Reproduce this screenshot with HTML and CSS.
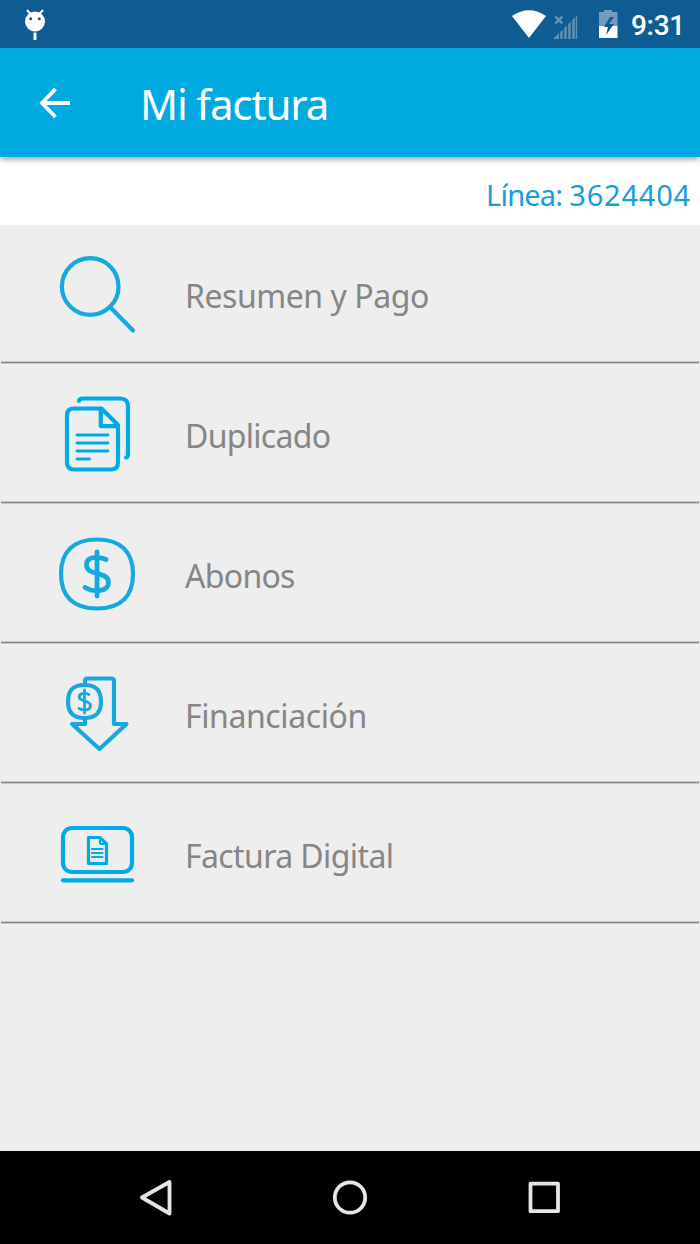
FILE: index.html
```html
<!DOCTYPE html>
<html lang="es">
<head>
    <meta charset="utf-8">
    <title>Mi factura</title>
    <link rel="stylesheet" href="styles.css">
</head>
<body>
    <div class="screen">
        <div class="status-bar">
            <svg class="debug-icon" width="24" height="34" viewBox="0 0 24 34">
                <circle cx="12" cy="13.500" r="10" fill="#fff"/>
                <path d="M4.500 2.500l3 3.500M19.500 2.500l-3 3.500" stroke="#fff" stroke-width="2" stroke-linecap="round"/>
                <path d="M12 24.500v7.500" stroke="#fff" stroke-width="3"/>
                <circle cx="7.700" cy="10.700" r="1.500" fill="#0f5c92"/>
                <circle cx="16.300" cy="10.700" r="1.500" fill="#0f5c92"/>
            </svg>
            <div class="status-right">
                <svg class="signals" width="120" height="48" viewBox="0 0 120 48">
                    <path d="M12 16Q29 4.500 46 16L29 38z" fill="#fff"/>
                    <path d="M53 39l6-6v6zM60.200 32l2.500-2.500V39h-2.500zM64.200 28l2.500-2.500V39h-2.500zM68.200 24l2.500-2.500V39h-2.500zM72.200 20l2.500-2.500V39h-2.500zM75.700 17l1.500-1.500V39h-1.500z" fill="#5f90b7"/>
                    <path d="M55.300 16.500l7 7M62.300 16.500l-7 7" stroke="#6997bb" stroke-width="2.400"/>
                    <path d="M99 12h5v-2h8v2h5.500v14H99z" fill="#729cbf"/>
                    <path d="M99 26h18.500v12H99z" fill="#fff"/>
                    <path d="M110 17l-6 10h4l-2 8 8-11h-5l5-7z" fill="#0f5c92"/>
                </svg>
                <span class="clock">9:31</span>
            </div>
        </div>

        <div class="toolbar">
            <svg class="back" width="34" height="34" viewBox="0 0 34 34">
                <path d="M18.500 3L5 17l13.500 14M5 17h28" fill="none" stroke="#fff" stroke-width="3.800"/>
            </svg>
            <h1 class="title">Mi factura</h1>
        </div>

        <div class="line-bar"><span class="line-label">Línea:</span><span class="line-number">3624404</span></div>

        <ul class="menu">
            <li class="menu-item">
                <svg class="icon" viewBox="0 0 120 110">
                    <circle cx="50.200" cy="46.500" r="28.300"/>
                    <path d="M70.500 67.500L93 90.500"/>
                </svg>
                <span class="label resumen">Resumen y Pago</span>
            </li>
            <li class="menu-item">
                <svg class="icon bright" viewBox="0 0 120 110">
                    <path d="M39 21q0-2.500 4-2.500h37q8 0 8 8V74q0 3.500-2 3.500"/>
                    <path d="M61.500 28.500H34q-7 0-7 7v47q0 7 7 7h37q7 0 7-7V45z"/>
                    <path d="M60.800 29v17.200H78"/>
                    <path class="thin" d="M37 55h31M37 63h31M37 71h31M37 79h12.500"/>
                </svg>
                <span class="label duplicado">Duplicado</span>
            </li>
            <li class="menu-item">
                <svg class="icon" viewBox="0 0 120 110">
                    <path d="M57 19.500C81 19.500 93 32 93 54S81 88.500 57 88.500 21 76 21 54 33 19.500 57 19.500z"/>
                    <path class="dollar" d="M66 39.500C58 36 46.500 36.500 46.500 44.500c0 6 5 7.500 10.500 9 6.500 1.800 11.500 3 11.500 9 0 9.500-15 10-23.500 5M57 32v44"/>
                </svg>
                <span class="label abonos">Abonos</span>
            </li>
            <li class="menu-item">
                <svg class="icon" viewBox="0 0 120 110">
                    <path d="M45 24v-3q0-2.500 2.500-2.500h24q2.500 0 2.500 2.500v43h12.500L59.500 89 32 64h13v-5"/>
                    <path d="M44.500 25C56 25 61 30.500 61 41.500S56 58 44.500 58 28 52.500 28 41.500 33 25 44.500 25z"/>
                    <path class="thin" d="M49 34.500c-4-1.800-9.800-1.300-9.800 2.500 0 5 11.300 3 11.300 8.500 0 5-6.500 5.500-11.500 3M44.500 30v23"/>
                </svg>
                <span class="label financiacion">Financiación</span>
            </li>
            <li class="menu-item">
                <svg class="icon bright" viewBox="0 0 120 110">
                    <rect x="23" y="28" width="69" height="44" rx="9"/>
                    <path d="M23 80.300h69"/>
                    <path class="page" d="M60 37.500H48.500v26h18V44z"/>
                    <path class="lines" d="M60 38v4.500q0 1.500 1.500 1.500H66M52 49h10.500M52 53h10.500M52 57h10.500"/>
                </svg>
                <span class="label digital">Factura Digital</span>
            </li>
        </ul>

        <div class="nav-bar">
            <svg class="nav-icon" viewBox="0 0 40 40"><path d="M33.500 5v31.500L6 20.500z"/></svg>
            <svg class="nav-icon" viewBox="0 0 40 40"><circle cx="20" cy="20.500" r="15.200"/></svg>
            <svg class="nav-icon" viewBox="0 0 40 40"><rect x="6.500" y="6.700" width="27.500" height="27.500"/></svg>
        </div>
    </div>
</body>
</html>
```
FILE: styles.css
```css
* { box-sizing: border-box; }
body { margin: 0; font-family: "Noto Sans", "Open Sans", sans-serif; background: #eee; }
svg { display: block; flex: none; }
.screen { display: flex; flex-direction: column; width: 700px; height: 1244px; }

.status-bar { display: flex; justify-content: space-between; height: 48px; padding-left: 23px; background: #0f5c92; z-index: 2; }
.debug-icon { margin-top: 8px; }
.status-right { display: flex; }
.clock { width: 80px; padding-left: 11px; font-family: Roboto, sans-serif; font-size: 28px; font-weight: 500; line-height: 51px; letter-spacing: -0.3px; color: #fff; white-space: nowrap; }

.toolbar { display: flex; align-items: center; height: 109px; padding: 0 0 0 37px; background: #00a9e0; box-shadow: 0 2px 6px rgba(0,0,0,0.4); z-index: 1; }
.title { margin: 3px 0 0 66px; font-size: 42px; font-weight: 400; line-height: 60px; letter-spacing: -0.9px; color: #fff; white-space: nowrap; }

.line-bar { display: flex; justify-content: flex-end; align-items: center; height: 68px; padding: 8px 9px 0 0; font-size: 29px; line-height: 40px; color: #129fdb; background: #fff; }
.line-label { margin-right: 7px; letter-spacing: -0.8px; }
.line-number { letter-spacing: 0.8px; }

.menu { flex: 1; margin: 0; padding: 0 1px; list-style: none; background: #eee; }
.menu-item { display: flex; align-items: flex-end; height: 140px; padding: 0 0 12px 39px; border-bottom: 1px solid #858585; box-shadow: 0 1px #c9c9c9, inset 0 -1px #c9c9c9; }
.menu-item:first-child { height: 138px; }
.icon { width: 120px; height: 110px; fill: none; stroke: #18a8e0; stroke-width: 4.2; stroke-linecap: round; stroke-linejoin: round; }
.bright { stroke: #00aae7; }
.thin { stroke-width: 2.8; }
.page { stroke-width: 3.2; }
.lines { stroke-width: 2.2; }
.dollar { stroke-width: 4.8; }
.label { margin: 0 0 32px 25px; font-size: 32px; line-height: 44px; color: #868686; white-space: nowrap; }
.resumen { letter-spacing: -0.45px; }
.duplicado { letter-spacing: -0.7px; }
.abonos { letter-spacing: -0.7px; }
.financiacion { letter-spacing: -0.4px; }
.digital { letter-spacing: -0.6px; }
.title { margin-left: 69px; letter-spacing: -1.1px; }

.nav-bar { display: flex; justify-content: center; gap: 154px; height: 93px; padding-top: 26px; background: #000; }
.nav-icon { width: 40px; height: 40px; fill: none; stroke: #e6e6e6; stroke-width: 3.8; stroke-linejoin: round; }
```
